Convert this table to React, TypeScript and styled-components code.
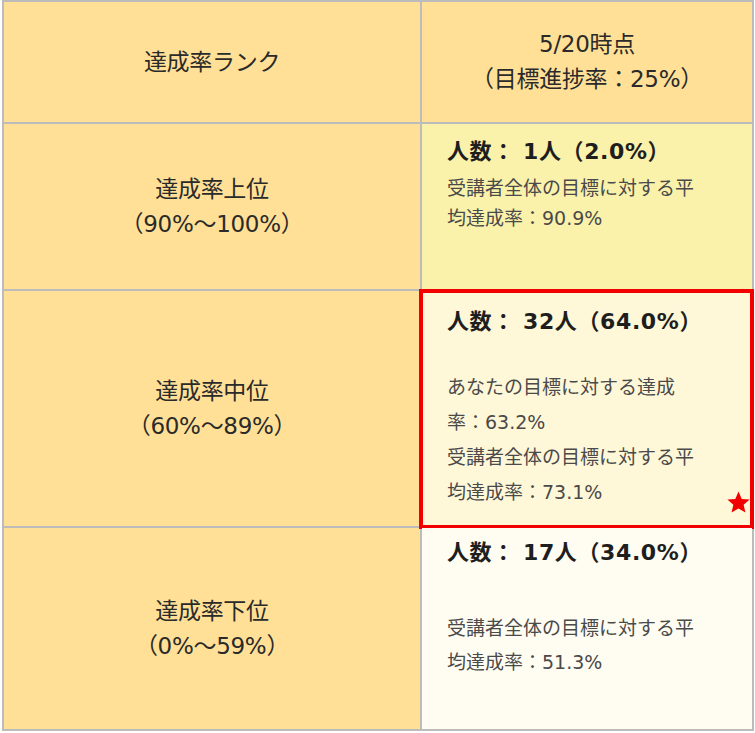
import {ReactNode} from 'react';
import styled, {createGlobalStyle} from 'styled-components';

const GlobalStyle = createGlobalStyle`
	html, body {
		margin     : 0;
		padding    : 0;
		background : #ffffff;
	}
	body {
		font-family : "DejaVu Sans", "Noto Sans CJK JP", sans-serif;
		color       : #222222;
	}
`;

const Table = styled.div`
	display               : grid;
	grid-template-columns : 416px 330px;
	grid-template-rows    : 120px 165px 235px 201px;
	gap                   : 2px;
	padding               : 2px;
	margin                : 0 0 0 2px;
	width                 : 748px;
	background-color      : #bcbcbc;
`;

const RankCell = styled.div`
	display          : flex;
	flex-direction   : column;
	align-items      : center;
	justify-content  : center;
	background-color : #ffe096;
	font-size        : 23px;
	line-height      : 35px;
	letter-spacing   : -0.3px;
	color            : #2a2a2a;
	text-align       : center;
`;

const StatCell = styled.div<{ tone: string; top: number; highlight?: boolean }>`
	display          : flex;
	flex-direction   : column;
	position         : relative;
	padding          : ${({top}) => top}px 10px 0 25px;
	background-color : ${({tone}) => tone};
	${({highlight}) => highlight ? `
		&::after {
			content  : '';
			position : absolute;
			inset    : -2px -2px -3px -3px;
			border   : 4px solid #f20000;
		}
	` : ''}
`;

const Count = styled.div`
	font-size      : 22px;
	font-weight    : 700;
	line-height    : 30px;
	letter-spacing : 0.6px;
	color          : #1e1e1e;
	white-space    : nowrap;
`;

const Note = styled.div<{ gap: number; lh: number }>`
	margin-top  : ${({gap}) => gap}px;
	font-size   : 19px;
	line-height : ${({lh}) => lh}px;
	color       : #4a4a4a;
	white-space : nowrap;
`;

const Star = styled.svg`
	position : absolute;
	right    : 1px;
	bottom   : 11px;
	width    : 25px;
	height   : 25px;
`;

const Stat = (props: { tone: string; top: number; gap: number; lh: number; count: string; highlight?: boolean; children: ReactNode }) => {
	const {tone, top, gap, lh, count, highlight, children} = props;

	return <StatCell tone={tone} top={top} highlight={highlight}>
		<Count>{count}</Count>
		<Note gap={gap} lh={lh}>{children}</Note>
		{highlight ? <Star viewBox="0 0 24 24">
			<path d="M12 1.5l3.1 7.1 7.6.6-5.8 5 1.8 7.5L12 17.7l-6.7 4 1.8-7.5-5.8-5 7.6-.6z" fill="#f20000"/>
		</Star> : null}
	</StatCell>;
};

export default function App() {
	return <>
		<GlobalStyle/>
		<Table>
			<RankCell>達成率ランク</RankCell>
			<RankCell>
				<span>5/20時点</span>
				<span>（目標進捗率：25%）</span>
			</RankCell>

			<RankCell>
				<span>達成率上位</span>
				<span>（90%〜100%）</span>
			</RankCell>
			<Stat tone="#faf2aa" top={13} gap={6} lh={30} count="人数： 1人（2.0%）">
				受講者全体の目標に対する平<br/>均達成率：90.9%
			</Stat>

			<RankCell>
				<span>達成率中位</span>
				<span>（60%〜89%）</span>
			</RankCell>
			<Stat tone="#fff8d8" top={16} gap={33} lh={35} count="人数： 32人（64.0%）" highlight>
				あなたの目標に対する達成<br/>率：63.2%<br/>受講者全体の目標に対する平<br/>均達成率：73.1%
			</Stat>

			<RankCell>
				<span>達成率下位</span>
				<span>（0%〜59%）</span>
			</RankCell>
			<Stat tone="#fffdf1" top={10} gap={43} lh={34} count="人数： 17人（34.0%）">
				受講者全体の目標に対する平<br/>均達成率：51.3%
			</Stat>
		</Table>
	</>;
}
